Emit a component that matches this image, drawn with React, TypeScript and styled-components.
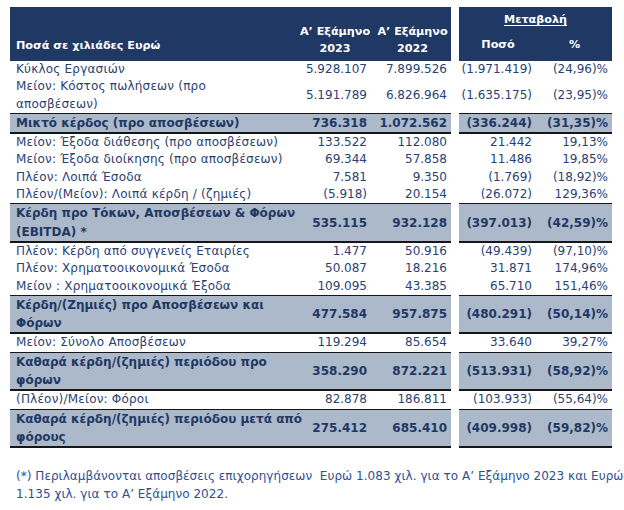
import * as React from "react"
import styled, { createGlobalStyle, css } from "styled-components"

const GlobalStyle = createGlobalStyle`
  body {
    margin: 0;
    background: #ffffff;
    font-family: "DejaVu Sans", "Noto Sans", sans-serif;
  }
`

const NAVY = "#1f3864"
const GREY = "#acb9ca"
const RULE = "#161616"

const Sheet = styled.div`
  box-sizing: border-box;
  width: 624px;
  padding: 7px 12px 0 10px;
  color: ${NAVY};
  font-size: 12px;
`
const Row = styled.div`
  display: flex;
  gap: 8px;
`
const blockKinds = {
  total: css`
    background: ${GREY};
    font-weight: bold;
    line-height: 18.3px;
    border-top: 1px solid ${RULE};
    border-bottom: 2px solid ${RULE};
  `,
  plain: css`
    line-height: 17.3px;
    color: #2b4172;
  `,
}
type Kind = keyof typeof blockKinds

const LeftBlock = styled.div<{ $kind: Kind }>`
  display: grid;
  grid-template-columns: 286px 78px 77px;
  width: 441px;
  align-items: center;
  ${(p) => blockKinds[p.$kind]}
`
const RightBlock = styled.div<{ $kind: Kind }>`
  display: grid;
  grid-template-columns: 78px 75px;
  width: 153px;
  align-items: center;
  ${(p) => blockKinds[p.$kind]}
`
const Label = styled.div<{ $bold?: boolean }>`
  padding-left: 6px;
  white-space: nowrap;
  letter-spacing: ${(p) => (p.$bold ? "0" : "0.2px")};
`
const Num = styled.div<{ $pad?: number }>`
  text-align: right;
  padding-right: ${(p) => p.$pad ?? 5}px;
  white-space: nowrap;
`

const HeadLeft = styled.div`
  display: grid;
  grid-template-columns: 286px 78px 77px;
  width: 441px;
  height: 54px;
  align-items: end;
  background: ${NAVY};
  color: #ffffff;
  font-weight: bold;
  font-size: 11.2px;
  line-height: 17px;
  padding-bottom: 4px;
  box-sizing: border-box;
`
const HeadLabel = styled.div`
  padding-left: 6px;
  padding-bottom: 3px;
`
const HeadYear = styled.div`
  text-align: center;
  white-space: nowrap;
`
const HeadRight = styled.div`
  display: flex;
  flex-direction: column;
  justify-content: space-between;
  width: 153px;
  height: 54px;
  box-sizing: border-box;
  padding: 4px 0 8px;
  background: ${NAVY};
  color: #ffffff;
  font-weight: bold;
  font-size: 11.2px;
  line-height: 17px;
`
const Caption = styled.div`
  text-align: center;
  text-decoration: underline;
  text-underline-offset: 2px;
`
const SubHeads = styled.div`
  display: grid;
  grid-template-columns: 78px 75px;
  text-align: center;
`
const Footnote = styled.div`
  margin-top: 19px;
  padding-left: 6px;
  line-height: 18px;
  color: #2f4f96;
  font-size: 12px;
  letter-spacing: 0.04px;
  white-space: nowrap;
`

type Line = {
  label: React.ReactNode
  a: string
  b: string
  diff: string
  pct: string
  total?: boolean
}

const lines: Line[] = [
  { label: "Κύκλος Εργασιών", a: "5.928.107", b: "7.899.526", diff: "(1.971.419)", pct: "(24,96)%" },
  {
    label: (
      <>
        Μείον: Κόστος πωλήσεων (προ
        <br />
        αποσβέσεων)
      </>
    ),
    a: "5.191.789",
    b: "6.826.964",
    diff: "(1.635.175)",
    pct: "(23,95)%",
  },
  { label: "Μικτό κέρδος (προ αποσβέσεων)", a: "736.318", b: "1.072.562", diff: "(336.244)", pct: "(31,35)%", total: true },
  { label: "Μείον: Έξοδα διάθεσης (προ αποσβέσεων)", a: "133.522", b: "112.080", diff: "21.442", pct: "19,13%" },
  { label: "Μείον: Έξοδα διοίκησης (προ αποσβέσεων)", a: "69.344", b: "57.858", diff: "11.486", pct: "19,85%" },
  { label: "Πλέον: Λοιπά Έσοδα", a: "7.581", b: "9.350", diff: "(1.769)", pct: "(18,92)%" },
  { label: "Πλέον/(Μείον): Λοιπά κέρδη / (ζημιές)", a: "(5.918)", b: "20.154", diff: "(26.072)", pct: "129,36%" },
  {
    label: (
      <>
        Κέρδη προ Τόκων, Αποσβέσεων &amp; Φόρων
        <br />
        (EBITDA) *
      </>
    ),
    a: "535.115",
    b: "932.128",
    diff: "(397.013)",
    pct: "(42,59)%",
    total: true,
  },
  { label: "Πλέον: Κέρδη από συγγενείς Εταιρίες", a: "1.477", b: "50.916", diff: "(49.439)", pct: "(97,10)%" },
  { label: "Πλέον: Χρηματοοικονομικά Έσοδα", a: "50.087", b: "18.216", diff: "31.871", pct: "174,96%" },
  { label: "Μείον : Χρηματοοικονομικά Έξοδα", a: "109.095", b: "43.385", diff: "65.710", pct: "151,46%" },
  {
    label: (
      <>
        Κέρδη/(Ζημιές) προ Αποσβέσεων και
        <br />
        Φόρων
      </>
    ),
    a: "477.584",
    b: "957.875",
    diff: "(480.291)",
    pct: "(50,14)%",
    total: true,
  },
  { label: "Μείον: Σύνολο Αποσβέσεων", a: "119.294", b: "85.654", diff: "33.640", pct: "39,27%" },
  {
    label: (
      <>
        Καθαρά κέρδη/(ζημιές) περιόδου προ
        <br />
        φόρων
      </>
    ),
    a: "358.290",
    b: "872.221",
    diff: "(513.931)",
    pct: "(58,92)%",
    total: true,
  },
  { label: "(Πλέον)/Μείον: Φόροι", a: "82.878", b: "186.811", diff: "(103.933)", pct: "(55,64)%" },
  {
    label: (
      <>
        Καθαρά κέρδη/(ζημιές) περιόδου μετά από
        <br />
        φόρους
      </>
    ),
    a: "275.412",
    b: "685.410",
    diff: "(409.998)",
    pct: "(59,82)%",
    total: true,
  },
]

export default function App() {
  return (
    <Sheet>
      <GlobalStyle />
      <Row>
        <HeadLeft>
          <HeadLabel>Ποσά σε χιλιάδες Ευρώ</HeadLabel>
          <HeadYear>
            Α’ Εξάμηνο
            <br />
            2023
          </HeadYear>
          <HeadYear>
            Α’ Εξάμηνο
            <br />
            2022
          </HeadYear>
        </HeadLeft>
        <HeadRight>
          <Caption>Μεταβολή</Caption>
          <SubHeads>
            <div>Ποσό</div>
            <div>%</div>
          </SubHeads>
        </HeadRight>
      </Row>
      {lines.map((l, i) => {
        const kind: Kind = l.total ? "total" : "plain"
        return (
          <Row key={i}>
            <LeftBlock $kind={kind}>
              <Label $bold={l.total}>{l.label}</Label>
              <Num $pad={7}>{l.a}</Num>
              <Num $pad={4}>{l.b}</Num>
            </LeftBlock>
            <RightBlock $kind={kind}>
              <Num>{l.diff}</Num>
              <Num $pad={4}>{l.pct}</Num>
            </RightBlock>
          </Row>
        )
      })}
      <Footnote>
        (*) Περιλαμβάνονται αποσβέσεις επιχορηγήσεων&nbsp; Ευρώ 1.083 χιλ. για το Α’ Εξάμηνο 2023 και Ευρώ
        <br />
        1.135 χιλ. για το Α’ Εξάμηνο 2022.
      </Footnote>
    </Sheet>
  )
}
